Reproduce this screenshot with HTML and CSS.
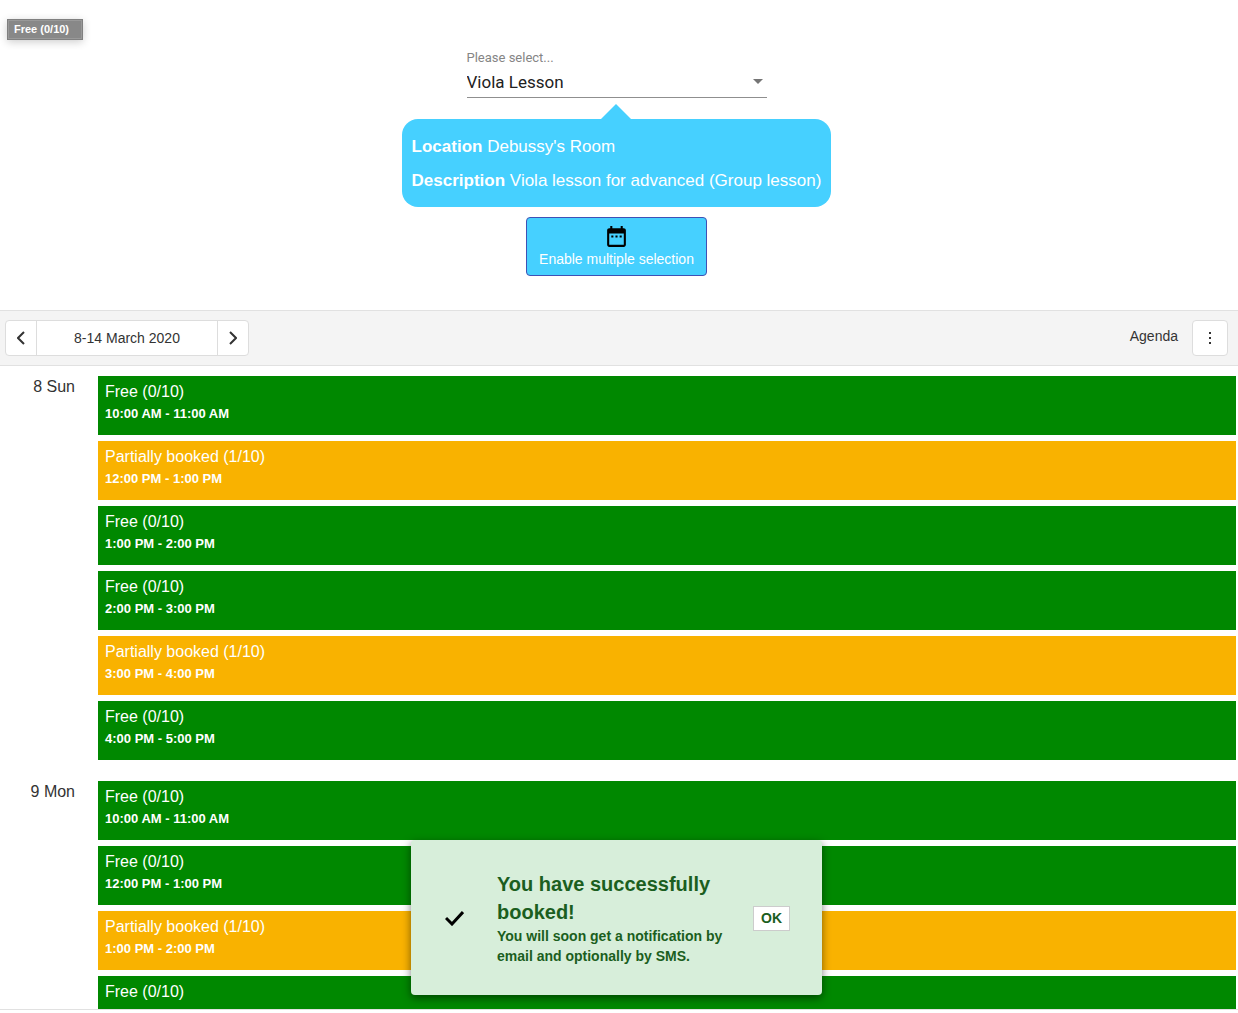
FILE: index.html
```html
<!DOCTYPE html>
<html lang="en">
<head>
<meta charset="utf-8">
<meta name="viewport" content="width=device-width, initial-scale=1">
<title>Lesson booking</title>
<link rel="stylesheet" href="styles.css">
</head>
<body>
<div class="page">
  <div class="tooltip" role="tooltip">Free (0/10)</div>
  <header class="chooser">
    <div class="field">
      <label class="field-label" for="lesson">Please select...</label>
      <div class="select-wrap">
        <select class="select" id="lesson"><option>Viola Lesson</option></select>
        <svg class="select-arrow" viewBox="0 0 10 5" aria-hidden="true"><path d="M0 0h10L5 5z"/></svg>
      </div>
    </div>
    <section class="bubble">
      <p class="bubble-line"><strong>Location</strong> Debussy's Room</p>
      <p class="bubble-line"><strong>Description</strong> Viola lesson for advanced (Group lesson)</p>
    </section>
    <button class="multi" type="button">
      <svg class="multi-icon" viewBox="0 0 24 24" aria-hidden="true"><path d="M9 11H7v2h2v-2zm4 0h-2v2h2v-2zm4 0h-2v2h2v-2zm2-7h-1V2h-2v2H8V2H6v2H5c-1.110 0-1.990.9-1.990 2L3 20c0 1.100.89 2 2 2h14c1.100 0 2-.9 2-2V6c0-1.100-.9-2-2-2zm0 16H5V9h14v11z"/></svg>
      <span>Enable multiple selection</span>
    </button>
  </header>

  <nav class="toolbar" aria-label="Calendar">
    <div class="range">
      <button class="range-step" type="button" aria-label="Previous week"><svg class="chevron" viewBox="0 0 8 14" aria-hidden="true"><path d="M7 1 1 7l6 6"/></svg></button>
      <button class="range-title" type="button">8-14 March 2020</button>
      <button class="range-step" type="button" aria-label="Next week"><svg class="chevron" viewBox="0 0 8 14" aria-hidden="true"><path d="m1 1 6 6-6 6"/></svg></button>
    </div>
    <div class="views">
      <span class="view-name">Agenda</span>
      <button class="more" type="button" aria-label="More views"><svg class="more-icon" viewBox="0 0 2 12" aria-hidden="true"><path d="M0 0h2v2H0zm0 5h2v2H0zm0 5h2v2H0z"/></svg></button>
    </div>
  </nav>

  <main class="agenda">
    <section class="day">
      <h2 class="day-name">8 Sun</h2>
      <ul class="slots">
        <li class="slot">Free (0/10)<strong class="slot-time">10:00 AM - 11:00 AM</strong></li>
        <li class="slot partial">Partially booked (1/10)<strong class="slot-time">12:00 PM - 1:00 PM</strong></li>
        <li class="slot">Free (0/10)<strong class="slot-time">1:00 PM - 2:00 PM</strong></li>
        <li class="slot">Free (0/10)<strong class="slot-time">2:00 PM - 3:00 PM</strong></li>
        <li class="slot partial">Partially booked (1/10)<strong class="slot-time">3:00 PM - 4:00 PM</strong></li>
        <li class="slot">Free (0/10)<strong class="slot-time">4:00 PM - 5:00 PM</strong></li>
      </ul>
    </section>
    <section class="day">
      <h2 class="day-name">9 Mon</h2>
      <ul class="slots">
        <li class="slot">Free (0/10)<strong class="slot-time">10:00 AM - 11:00 AM</strong></li>
        <li class="slot">Free (0/10)<strong class="slot-time">12:00 PM - 1:00 PM</strong></li>
        <li class="slot partial">Partially booked (1/10)<strong class="slot-time">1:00 PM - 2:00 PM</strong></li>
        <li class="slot">Free (0/10)<strong class="slot-time">2:00 PM - 3:00 PM</strong></li>
      </ul>
    </section>
  </main>

  <div class="toast" role="status">
    <svg class="toast-icon" viewBox="0 0 19 15" aria-hidden="true"><path d="M1 7l6 6L18 1"/></svg>
    <div class="toast-text">
      <h3 class="toast-title">You have successfully booked!</h3>
      <p class="toast-body">You will soon get a notification by email and optionally by SMS.</p>
    </div>
    <button class="toast-ok" type="button">OK</button>
  </div>
</div>
</body>
</html>
```
FILE: styles.css
```css
* {
  box-sizing: border-box;
}

body {
  margin: 0;
  background: #fff;
  color: #333;
  font-family: "Liberation Sans", Arial, Helvetica, sans-serif;
  font-size: 16px;
}

button {
  font: inherit;
  color: inherit;
  padding: 0;
  cursor: pointer;
}

h2,
h3,
p,
ul {
  margin: 0;
  padding: 0;
}

.page {
  display: flex;
  flex-direction: column;
  height: 100vh;
  padding-bottom: 3px;
}

/* Hover label of a slot */
.tooltip {
  position: absolute;
  top: 19px;
  left: 7px;
  padding: 3px 13px 3px 6px;
  border: 1px solid #808080;
  background: #888;
  box-shadow: 0 2px 8px rgba(0, 0, 0, 0.2), inset 0 0 0 1px #999;
  color: #fff;
  font-size: 11px;
  font-weight: 700;
  line-height: 13px;
}

/* Lesson chooser */
.chooser {
  display: flex;
  flex-direction: column;
  align-items: center;
  padding: 50px 5px 34px 0;
}

.field {
  width: 300px;
  font-family: Roboto, sans-serif;
}

.field-label {
  display: block;
  color: #858585;
  font-size: 13px;
  line-height: 16px;
}

.select-wrap {
  display: flex;
  align-items: center;
  height: 32px;
  border-bottom: 1px solid #8f8f8f;
}

.select {
  flex: 1;
  margin: 0;
  padding: 0;
  appearance: none;
  border: 0;
  background: none;
  color: #212121;
  font: 17px/24px Roboto, sans-serif;
}

.select-arrow {
  width: 10px;
  height: 5px;
  margin-right: 4px;
  fill: #757575;
}

.bubble {
  position: relative;
  margin-top: 21px;
  padding: 11px 10px 9px;
  border-radius: 16px;
  background: #46d0ff;
  color: #fff;
}

.bubble::before {
  content: "";
  position: absolute;
  bottom: 100%;
  left: 50%;
  margin-left: -15px;
  border: 15px solid transparent;
  border-top: 0;
  border-bottom-color: #46d0ff;
}

.bubble-line {
  font-size: 17px;
  line-height: 34px;
}

.multi {
  display: flex;
  flex-direction: column;
  align-items: center;
  gap: 2px;
  margin-top: 10px;
  padding: 6px 12px 7px;
  border: 1px solid #3f51b5;
  border-radius: 4px;
  background: #46d0ff;
  color: #fff;
  font-size: 14px;
  line-height: 17px;
}

.multi-icon {
  width: 25px;
  height: 25px;
  fill: #000;
}

/* Calendar toolbar */
.toolbar {
  display: flex;
  flex: none;
  align-items: center;
  justify-content: space-between;
  height: 56px;
  padding: 0 10px 0 5px;
  border-top: 1px solid #e1e1e1;
  border-bottom: 1px solid #e1e1e1;
  background: #f4f4f4;
  font-size: 14px;
}

.range {
  display: flex;
  height: 36px;
  border: 1px solid #ddd;
  border-radius: 4px;
  background: #fff;
}

.range-step,
.range-title {
  display: flex;
  align-items: center;
  justify-content: center;
  width: 30px;
  border: 0;
  background: none;
}

.range-title {
  width: 182px;
  border: solid #ddd;
  border-width: 0 1px;
}

.chevron {
  width: 8px;
  height: 14px;
  fill: none;
  stroke: #333;
  stroke-width: 2;
}

.views {
  display: flex;
  align-items: center;
  gap: 14px;
}

.view-name {
  padding-bottom: 4px;
}

.more {
  display: flex;
  align-items: center;
  justify-content: center;
  width: 36px;
  height: 36px;
  border: 1px solid #ddd;
  border-radius: 4px;
  background: #fff;
}

.more-icon {
  width: 2px;
  height: 12px;
  fill: #333;
}

/* Agenda */
.agenda {
  flex: 1;
  min-height: 0;
  overflow: hidden;
  border-bottom: 1px solid #e1e1e1;
}

.day {
  display: grid;
  grid-template-columns: 75px 1fr;
  column-gap: 23px;
  padding: 10px 2px 11px 0;
}

.day-name {
  font-size: 16px;
  font-weight: 400;
  line-height: 22px;
  text-align: right;
}

.slots {
  display: grid;
  gap: 6px;
  list-style: none;
}

.slot {
  height: 59px;
  padding: 5px 7px;
  background: #008800;
  color: #fff;
  line-height: 22px;
}

.partial {
  background: #f9b200;
}

.slot-time {
  display: block;
  font-size: 13px;
}

/* Confirmation message */
.toast {
  position: absolute;
  bottom: 18px;
  left: 50%;
  display: flex;
  align-items: center;
  width: 411px;
  margin-left: -208px;
  padding: 30px 32px 29px 34px;
  border-radius: 4px;
  background: #d7eeda;
  box-shadow: 0 3px 8px rgba(0, 0, 0, 0.5);
  color: #1b5e20;
}

.toast-icon {
  flex: none;
  width: 19px;
  height: 15px;
  fill: none;
  stroke: #000;
  stroke-width: 3;
}

.toast-text {
  flex: 1;
  margin: 0 24px 0 33px;
}

.toast-title {
  font-size: 20px;
  line-height: 28px;
}

.toast-body {
  font-size: 14px;
  font-weight: 700;
  line-height: 20px;
}

.toast-ok {
  width: 37px;
  height: 25px;
  border: 1px solid #ccc;
  background: #fff;
  font-size: 14px;
  font-weight: 700;
}
```
